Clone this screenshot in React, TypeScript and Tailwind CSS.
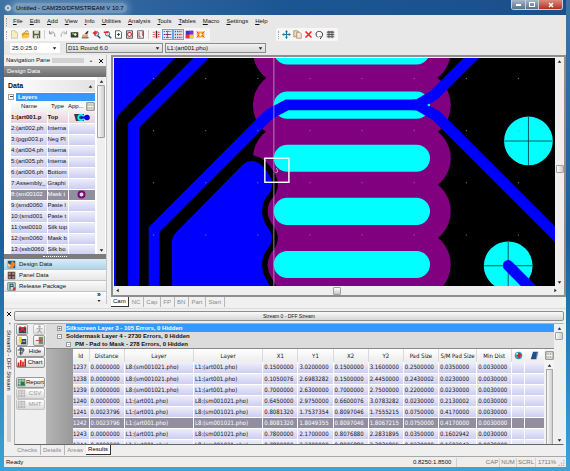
import React from 'react';
import clsx from 'clsx';

const MENUS = ['File', 'Edit', 'Add', 'View', 'Info', 'Utilities', 'Analysis', 'Tools', 'Tables', 'Macro', 'Settings', 'Help'];

interface Layer {
  name: string;
  type: string;
}

const LAYERS: Layer[] = [
  { name: '1:(art001.p', type: 'Top' },
  { name: '2:(art002.ph', type: 'Interna' },
  { name: '3:(pgp003.p', type: 'Neg Pl' },
  { name: '4:(art004.ph', type: 'Interna' },
  { name: '5:(art005.ph', type: 'Interna' },
  { name: '6:(art006.ph', type: 'Bottom' },
  { name: '7:Assembly_', type: 'Graphi' },
  { name: '8:(sm00102', type: 'Mask t' },
  { name: '9:(smd0060', type: 'Paste l' },
  { name: '10:(smd001', type: 'Paste t' },
  { name: '11:(sst0010', type: 'Silk top' },
  { name: '12:(sm0060', type: 'Mask b' },
  { name: '13:(ssb0060', type: 'Silk bo' },
];

const RESULT_HEADS = ['Id', 'Distance', 'Layer', 'Layer', 'X1', 'Y1', 'X2', 'Y2', 'Pad Size', 'S/M Pad Size', 'Min Dist'];

const RESULTS = [
  ['1237', '0.0000000', 'L8:(sm001021.pho)', 'L1:(art001.pho)', '0.1500000', '3.0200000', '0.1500000', '3.1600000', '0.2500000', '0.0350000', '0.0030000'],
  ['1238', '0.0000000', 'L8:(sm001021.pho)', 'L1:(art001.pho)', '0.1050076', '2.6983282', '0.1500000', '2.4450000', '0.2430002', '0.0230000', '0.0030000'],
  ['1239', '0.0000000', 'L8:(sm001021.pho)', 'L1:(art001.pho)', '0.7000000', '2.6300000', '0.7000000', '2.7500000', '0.2200000', '0.0230000', '0.0030000'],
  ['1240', '0.0000000', 'L1:(art001.pho)', 'L8:(sm001021.pho)', '0.6450000', '2.9750000', '0.6600076', '3.0783282', '0.0230000', '0.2130002', '0.0030000'],
  ['1241', '0.0023796', 'L1:(art001.pho)', 'L8:(sm001021.pho)', '0.8081320', '1.7537354', '0.8097046', '1.7555215', '0.0750000', '0.4170000', '0.0030000'],
  ['1242', '0.0023796', 'L1:(art001.pho)', 'L8:(sm001021.pho)', '0.8081320', '1.8049355', '0.8097046', '1.8067215', '0.0750000', '0.4170000', '0.0030000'],
  ['1243', '0.0000000', 'L1:(art001.pho)', 'L8:(sm001021.pho)', '0.7800000', '2.1700000', '0.8076880', '2.2831895', '0.0350000', '0.1602942', '0.0030000'],
  ['1244', '0.0000000', 'L1:(art001.pho)', 'L8:(sm001021.pho)', '0.7800000', '2.2700000', '0.8076880', '2.3831895', '0.0230000', '0.1602942', '0.0030000'],
];

const ICONS: Record<string, React.ReactNode> = {
  new: <><path d="M2 1h5l3 3v7H2z" fill="#f4eec0" stroke="#b9b48a" strokeWidth=".8" /><path d="M7 1v3h3" fill="#d8d29a" /></>,
  open: <><path d="M1 5l3-2 7 1-1 6-8 1z" fill="#e0a010" /><path d="M4 6h8l-3 5H1z" fill="#f8c83c" /><path d="M5 3c2-3 4-2 5 0" stroke="#555" fill="none" /></>,
  save: <><path d="M1 1h10v10H1z" fill="#59613f" /><path d="M3 1h6v4H3zM3 7h6v4H3z" fill="#dfe3cf" /><path d="M7 8h1v3H7z" fill="#333" /></>,
  undo: <path d="M2 1v4h4M2 5c3-4 8-3 7 4" fill="none" stroke="#8d8d8d" strokeWidth="1.2" />,
  redo: <path d="M10 1v4H6M10 5C7 1 2 2 3 9" fill="none" stroke="#a9a9a9" strokeWidth="1.2" />,
  zoomAll: <><path d="M1 3h10v7H1z" fill="#333b33" /><circle cx="7" cy="6" r="2.4" fill="#dff0d0" stroke="#222" /><path d="M3 4h2v2H3z" fill="#9c3" /></>,
  paint: <><path d="M5 5l4-4 1 1-2 4z" fill="#333" /><path d="M2 6h7l1 5H1z" fill="#e0a878" /><path d="M1 10h9v1H1z" fill="#345" /></>,
  zoomIn: <><path d="M7 7l4 4" stroke="#246" strokeWidth="1.6" /><circle cx="6" cy="5" r="3" fill="#cde" stroke="#357" /><path d="M1 4h6M4 1v6" stroke="#e22" strokeWidth="1.8" /></>,
  zoomOut: <><path d="M7 7l4 4" stroke="#246" strokeWidth="1.6" /><circle cx="6" cy="5" r="3" fill="#cde" stroke="#357" /><path d="M1 3h6" stroke="#e22" strokeWidth="2" /></>,
  sheetPlus: <><path d="M2 1h6l2 2v8H2z" fill="#fff" stroke="#333" /><path d="M4 6h4M6 4v4" stroke="#262" strokeWidth="1.4" /></>,
  sheetRed: <><path d="M2 1h8v10H2z" fill="#ddd" stroke="#333" /><circle cx="6" cy="6" r="2.6" fill="#fff" stroke="#d22" strokeWidth="1.4" /></>,
  sheetPen: <><path d="M2 1h8v10H2z" fill="#eee" stroke="#444" /><path d="M4 3v6h2M9 2v6" stroke="#a33" strokeWidth="1.2" fill="none" /></>,
  snap: <><path d="M1 3h3M1 6h3M1 9h3M8 3h3M8 6h3M8 9h3" stroke="#e33" strokeWidth="1.6" strokeDasharray="1.4 .6" /><path d="M5 1h2v10H5z" fill="#333" /></>,
  gridBlue: <><path d="M1 2h10M1 6h10M1 10h10" stroke="#d22" strokeWidth="1.6" strokeDasharray="1.6 1.4" /><path d="M1 6h10M6 1v10" stroke="#226" strokeWidth=".7" /></>,
  grid: <path d="M1 2h10M1 6h10M1 10h10" stroke="#d22" strokeWidth="1.8" strokeDasharray="1.8 1.2" />,
  colors: <><path d="M1 1h10v10H1z" fill="#33c" /><path d="M6 1h5v5H6z" fill="#8a2be2" /><path d="M1 6h5v5H1z" fill="#e33" /><path d="M6 6h5v5H6z" fill="#fc3" /></>,
  film: <><path d="M1 2h10v8H1z" fill="#f7b23c" /><path d="M1 2l4 4-4 4M11 2L7 6l4 4" stroke="#e33" strokeWidth="1.2" fill="none" /><circle cx="6" cy="6" r="1.6" fill="#fff" /></>,
  move: <><path d="M1 6h10M6 1v10" stroke="#17a" strokeWidth="1.3" /><path d="M4 3l2-3 2 3zM4 9l2 3 2-3zM3 4L0 6l3 2zM9 4l3 2-3 2z" fill="#17a" /></>,
  copy: <><path d="M1 1h5l2 2v6H1z" fill="#f7d9b4" stroke="#85694d" strokeWidth=".8" /><path d="M5 3h4l2 2v6H5z" fill="#fbe8d0" stroke="#85694d" strokeWidth=".8" /></>,
  remove: <path d="M2 2l8 8M10 2l-8 8" stroke="#e22" strokeWidth="2" />,
  rotate: <path d="M4 10C-1 6 2 1 6 2c5 0 5 6 2 8M6 8l2 2-1 2" stroke="#334" strokeWidth="1.3" fill="none" />,
  mirror: <><path d="M1 2h10v8H1z" fill="#c9c9c9" /><path d="M1 3h10M1 6h10M1 9h10M4 1v10M8 1v10" stroke="#333" strokeWidth=".9" /><path d="M2 2h8" stroke="#e33" /></>,
  binRed: <><path d="M1 3h10v8H1z" fill="#29435c" /><path d="M2 2l8 7M10 2L2 9" stroke="#e22" strokeWidth="2" /></>,
  figure: <><circle cx="6" cy="2" r="1.6" fill="#aaa" /><path d="M2 5h8M6 4v3M6 7l-3 4M6 7l3 4" stroke="#aaa" strokeWidth="1.5" /></>,
  binAdd: <><path d="M4 4h7v7H4z" fill="#26486b" /><path d="M1 1h4v8H1z" fill="#e8d62a" /><path d="M6 7h4" stroke="#fff" /></>,
  binMove: <><path d="M5 1h6v10H5z" fill="#7a8d66" /><path d="M1 6h7M6 4l3 2-3 2" stroke="#b44" strokeWidth="1.2" fill="none" /></>,
  hide: <><circle cx="5" cy="2" r="1.7" fill="#345" /><path d="M1 4h9M5 4v7M8 1v6M3 8h5" stroke="#345" strokeWidth="1.5" /></>,
  chart: <><path d="M1 6h2v5H1zM4 3h2v8H4zM7 5h2v6H7zM10 1h2v10h-2z" fill="#d11" /><path d="M0 11h12" stroke="#622" /></>,
  report: <><path d="M1 1h10v10H1z" fill="#57856e" /><path d="M1 4h10M1 7h10M4 1v10M8 1v10" stroke="#dfe" strokeWidth=".8" /><path d="M5 5h5v5H5z" fill="#2a7a3c" /></>,
  sheetGray: <><path d="M1 1h10v10H1z" fill="#b5b5b5" /><path d="M1 4h10M1 7h10M4 1v10M8 1v10" stroke="#eee" strokeWidth=".8" /></>,
  design: <><path d="M1 1h10v10H1z" fill="#24507c" /><path d="M2 11l5-10 4 4-3 6z" fill="#f08020" /><path d="M1 4l4 3-3 4z" fill="#ffd9a0" /></>,
  panel: <><path d="M1 1h10v10H1z" fill="#444" /><path d="M2 2h3v3H2zM7 2h3v3H7zM2 7h3v3H2zM7 7h3v3H7z" fill="#c77" /></>,
  release: <><path d="M1 1h10v10H1z" fill="#cfe6dc" stroke="#366" /><path d="M4 10V3h4v3H4" stroke="#246" strokeWidth="1.4" fill="none" /><path d="M8 7h3v4H8z" fill="#c33" /></>,
  columns: <><path d="M1 1h10v10H1z" fill="#f2f2e8" stroke="#555" /><path d="M2 4h8M2 8h8" stroke="#555" strokeDasharray="1.5 .8" /></>,
  globe: <><circle cx="6" cy="6" r="5" fill="#2aa0b4" /><path d="M6 2l4 3-3 5-3-4z" fill="#d22" /><path d="M2 4l3-2v3z" fill="#fff" /></>,
  book: <><path d="M4 1h7L8 11H1z" fill="#1f4f8f" /><path d="M9 2l2 0-2 9H8z" fill="#8a93a0" /></>,
  app: <><circle cx="6" cy="6" r="5" fill="#b7c9d6" stroke="#5b7a94" /><path d="M6 1v10M1 6h10M3 3l6 6M9 3L3 9" stroke="#e7f0f5" /><circle cx="6" cy="6" r="1.6" fill="#567" /></>,
  resize: <path d="M9 2h2v2H9zM5 6h2v2H5zM9 6h2v2H9zM1 10h2v2H1zM5 10h2v2H5zM9 10h2v2H9z" fill="#aaa" />,
  up: <path d="M3 8l3-4 3 4z" fill="#222" />,
  down: <path d="M3 4l3 4 3-4z" fill="#222" />,
  left: <path d="M8 3L4 6l4 3z" fill="#222" />,
  right: <path d="M4 3l4 3-4 3z" fill="#222" />,
  close: <path d="M2 2l8 8M10 2l-8 8" stroke="#111" strokeWidth="2" />,
};

const Icon: React.FC<{ name: string; className?: string }> = ({ name, className = 'size-[9px]' }) => (
  <svg viewBox="0 0 12 12" className={clsx('shrink-0', className)} aria-hidden="true">{ICONS[name]}</svg>
);

const ToolButton: React.FC<{ name: string; active?: boolean }> = ({ name, active }) => (
  <button
    aria-label={name}
    className={clsx('flex size-[11px] items-center justify-center', active && 'border border-[#5aaaf0] bg-[#dcebfa]')}
  >
    <Icon name={name} />
  </button>
);

const Grip = () => <span className="h-2 border-l border-dotted border-[#a0a0a0]" />;

const ScrollColumn: React.FC<{ thumb: string; className?: string }> = ({ thumb, className }) => (
  <div className={clsx('flex w-2 shrink-0 flex-col items-center bg-[#efefef]', className)}>
    <button aria-label="Scroll up" className="h-2"><Icon name="up" className="size-[7px]" /></button>
    <div className="flex w-full flex-1 flex-col">
      <div className={clsx('w-full rounded-[1px] border border-[#a0a0a0] bg-linear-to-r from-[#f8f8f8] to-[#cfcfcf]', thumb)} />
    </div>
    <button aria-label="Scroll down" className="h-2"><Icon name="down" className="size-[7px]" /></button>
  </div>
);

const TitleBar = () => (
  <header className="flex h-[15px] shrink-0 items-center bg-linear-to-r from-[#3f73a5] via-[#1d5594] to-[#1a4f8b] pr-[3px]">
    <Icon name="app" className="mr-[1px] size-[8px]" />
    <h1 className="rounded-full bg-white/30 px-[3px] text-[6px] leading-[10px] text-black shadow-[0_0_6px_3px_rgba(200,215,230,0.3)]">
      Untitled - CAM350/DFMSTREAM V 10.7
    </h1>
    <div className="ml-auto flex h-[10px] self-start overflow-hidden rounded-b-[3px] border border-t-0 border-[#c3d0dd]">
      <button aria-label="Minimize" className="flex w-[14px] items-center justify-center border-r border-[#c3d0dd] bg-linear-to-b from-[#a9b8cb] to-[#55728f]">
        <span className="h-[2px] w-[5px] bg-white" />
      </button>
      <button aria-label="Maximize" className="flex w-[13px] items-center justify-center border-r border-[#c3d0dd] bg-linear-to-b from-[#a9b8cb] to-[#55728f]">
        <span className="h-[5px] w-[6px] border border-white" />
      </button>
      <button aria-label="Close" className="flex w-[23px] items-center justify-center bg-linear-to-b from-[#d98a7c] to-[#b52a1a]">
        <svg viewBox="0 0 12 12" className="size-[6px]"><path d="M2 2l8 8M10 2l-8 8" stroke="#fff" strokeWidth="3" /></svg>
      </button>
    </div>
  </header>
);

const Combo: React.FC<{ label: string; value: string; className: string }> = ({ label, value, className }) => (
  <div className={clsx('flex h-[10px] items-center', className)}>
    <select aria-label={label} className="min-w-0 flex-1 appearance-none text-[6px] leading-[8px] outline-none">
      <option>{value}</option>
    </select>
    <Icon name="down" className="pointer-events-none size-[7px]" />
  </div>
);

const Toolbars = () => (
  <div className="shrink-0 bg-[#e8e8e8]">
    <nav className="flex h-[13px] items-center pl-[2px]">
      <Grip />
      <div className="ml-[6px] flex gap-[7px]">
        {MENUS.map((menu) => (
          <button key={menu} className="text-[6px] leading-[9px]"><span className="underline">{menu[0]}</span>{menu.slice(1)}</button>
        ))}
      </div>
    </nav>
    <div className="flex h-[13px] items-center">
      <div className="flex h-[13px] w-[206px] items-center rounded-[2px] bg-[#f7f7f7] pl-[2px]">
        <Grip />
        <div className="ml-[2px] flex">
          {['new', 'open', 'save'].map((n) => <ToolButton key={n} name={n} />)}
        </div>
        <span className="mx-[2px] h-[9px] border-l border-[#d0d0d0]" />
        <div className="flex">
          {['undo', 'redo', 'zoomAll', 'paint', 'zoomIn', 'zoomOut', 'sheetPlus', 'sheetRed', 'sheetPen'].map((n) => <ToolButton key={n} name={n} />)}
        </div>
        <span className="mx-[2px] h-[9px] border-l border-[#d0d0d0]" />
        <div className="flex">
          <ToolButton name="snap" />
          <ToolButton name="gridBlue" active />
          <ToolButton name="grid" active />
          <ToolButton name="colors" />
          <ToolButton name="film" />
        </div>
      </div>
      <div className="ml-[66px] flex h-[13px] items-center rounded-[2px] bg-[#f7f7f7] px-[2px]">
        <Grip />
        <div className="ml-[2px] flex">
          {['move', 'copy', 'remove', 'rotate', 'mirror'].map((n) => <ToolButton key={n} name={n} />)}
        </div>
      </div>
    </div>
    <div className="flex h-[14px] items-center pl-[6px]">
      <Combo label="Grid" value="25.0:25.0" className="mr-[6px] w-[50px] bg-white px-[2px]" />
      <Combo label="Aperture" value="D11   Round 6.0" className="mr-[2px] w-[97px] border border-[#8a8a8a] bg-linear-to-b from-[#f2f2f2] to-[#d8d8d8] px-[1px]" />
      <Combo label="Layer" value="L1:(art001.pho)" className="w-[101px] border border-[#8a8a8a] bg-linear-to-b from-[#f2f2f2] to-[#d8d8d8] px-[1px]" />
    </div>
  </div>
);

const NavigationPane = () => (
  <aside className="mb-[4px] flex w-[103px] shrink-0 flex-col border-r border-[#c8c8c8] bg-[#f0f0f0]">
    <div className="flex h-[11px] shrink-0 items-center gap-[2px] px-[2px]">
      <h2 className="text-[6px] leading-[9px] whitespace-nowrap">Navigation Pane</h2>
      <span className="h-[5px] flex-1 bg-[#d2d2d2]" />
      <Icon name="up" className="mx-[2px] size-[6px] opacity-60" />
      <button aria-label="Close navigation"><Icon name="close" className="size-[6px]" /></button>
    </div>
    <div className="flex h-[11px] shrink-0 items-center bg-linear-to-b from-[#9a9a9a] to-[#6c6c6c] px-[3px] text-[6px] text-white">Design Data</div>
    <div className="flex min-h-0 flex-1 bg-white pl-[4px]">
      <div className="min-w-0 flex-1 pt-[3px]">
        <div className="flex h-[12px] items-center justify-between bg-linear-to-r from-white to-[#e2e2e2] text-[7px] font-bold">
          Data
          <Icon name="up" className="mr-[1px] size-[7px]" />
        </div>
        <div className="flex h-[9px] items-center gap-[2px] text-[6px]">
          <span className="flex size-[6px] items-center justify-center border border-[#a0a0a0] leading-none"><span className="h-px w-[3px] bg-[#446]" /></span>
          <span className="flex-1 bg-[#3399ff] pl-[2px] leading-[8px] font-bold text-white">Layers</span>
        </div>
        <table className="ml-[3px] w-[84px] table-fixed text-[6px] leading-[9px]">
          <colgroup>
            <col className="w-[36px]" />
            <col className="w-[21px]" />
            <col className="w-[27px]" />
          </colgroup>
          <thead>
            <tr className="h-[11px] bg-linear-to-b from-white to-[#efefef]">
              <th className="font-normal">Name</th>
              <th className="font-normal">Type</th>
              <th className="font-normal">
                <span className="flex items-center justify-between">App...<Icon name="columns" /></span>
              </th>
            </tr>
          </thead>
          <tbody>
            {LAYERS.map((layer, i) => (
              <tr
                key={layer.name}
                className={clsx('h-[11px]', {
                  'bg-linear-to-b from-[#f5eaf0] to-[#e6d3dc] font-bold': i === 0,
                  'bg-[#918ea0] text-white': i === 7,
                  'bg-linear-to-b from-[#f0f0fa] to-[#cdcdf3]': i !== 0 && i !== 7,
                })}
              >
                <td className="border-r border-b border-white whitespace-nowrap">{layer.name}</td>
                <td className="border-r border-b border-white whitespace-nowrap">{layer.type}</td>
                <td className="border-b border-white">
                  {i === 0 && (
                    <svg viewBox="0 0 18 9" className="mx-auto h-[9px] w-[18px]">
                      <path d="M1 1h10v7H3z" fill="#3a3a3a" /><circle cx="8" cy="4.5" r="3.6" fill="#0ff" /><circle cx="14" cy="4.5" r="2.8" fill="#00d" /><circle cx="8" cy="4.5" r="1.8" fill="#003a7a" /><path d="M8 4.5h6" stroke="#00d" strokeWidth="2" />
                    </svg>
                  )}
                  {i === 7 && (
                    <svg viewBox="0 0 9 9" className="mx-auto size-[9px]"><circle cx="4.5" cy="4.5" r="3" fill="#ddd" stroke="#800080" strokeWidth="2" /></svg>
                  )}
                </td>
              </tr>
            ))}
          </tbody>
        </table>
      </div>
      <ScrollColumn thumb="h-[53px]" className="mr-[1px] ml-[2px]" />
    </div>
    <div className="flex h-[5px] shrink-0 items-center justify-center bg-[#7c7c7c]">
      <span className="w-6 border-t border-dotted border-white" />
    </div>
    {[['design', 'Design Data'], ['panel', 'Panel Data'], ['release', 'Release Package']].map(([icon, text], i) => (
      <button
        key={text}
        className={clsx(
          'flex h-[11px] shrink-0 items-center gap-[3px] border-b border-[#c4c4c4] pl-[3px] text-[6px]',
          i === 0 ? 'bg-linear-to-b from-[#d9ecf8] to-[#b0d5ec]' : 'bg-linear-to-b from-[#fafafa] to-[#e6e6e6]',
        )}
      >
        <Icon name={icon} />
        {text}
      </button>
    ))}
    <div className="flex h-[12px] shrink-0 items-start justify-end bg-linear-to-b from-white to-[#ececec] pr-[4px]">
      <button aria-label="Configure buttons" className="flex flex-col items-center text-[7px] leading-[6px] font-bold">»<Icon name="down" className="size-[6px]" /></button>
    </div>
  </aside>
);

const PAD_ROWS = [51, 105, 158, 211, 264];
const DOT_COLS = [153, 205, 257, 309, 361, 413, 465, 517];
const DOT_ROWS = [78, 130, 182, 234];

const Board = () => (
  <svg viewBox="114 58 440 228" preserveAspectRatio="xMinYMin slice" className="min-h-0 min-w-0 flex-1 bg-black">
    {PAD_ROWS.map((y) => <rect key={y} x="252.6" y={y - 34} width="197.4" height="68" rx="34" fill="#800080" />)}
    <path
      d="M171.7 290V242Q172 236 176 232L242 165Q251 157 260 164Q267 170 270.500 178Q274 185 269 193Q262 200 261.700 211Q262 220 268 228Q275 237 269 246Q262 254 261.700 264Q262 273 267 281L272 290Z"
      fill="#00f"
      stroke="#000"
      strokeWidth="11"
      paintOrder="stroke"
    />
    {PAD_ROWS.map((y) => <rect key={y} x="273.3" y={y - 13.5} width="156" height="27" rx="13.5" fill="#0ff" />)}
    <path d="M114 58H175L120 113Q116 117 116 124V290H114Z" fill="#00f" />
    <path d="M116 124V290H118V114Z" fill="#000" />
    {[[527.5, 140.7], [507.3, 265.3]].map(([cx, cy]) => (
      <g key={cx}>
        <circle cx={cx} cy={cy} r="24.3" fill="#0ff" />
        <path d={`M${cx - 24} ${cy}h48M${cx} ${cy - 24}v48`} stroke="#045c5c" />
      </g>
    ))}
    <g fill="none" stroke="#00f" strokeWidth="10.8">
      <path d="M206 53L133.500 125.500V290" />
      <path d="M154 290V229L269 114L286.500 104.800H417L434 94.500L476 52.500" />
      <path d="M412 104.800H417L436 116L562 242" />
      <path d="M507.300 265L536 294" strokeLinecap="round" />
    </g>
    <rect x="427" y="104" width="2" height="2" fill="#0ff" />
    <path d="M273.500 58V286" stroke="#b9a3c9" strokeWidth=".8" />
    {DOT_ROWS.map((y) => DOT_COLS.map((x) => <rect key={`${x}-${y}`} x={x} y={y} width="1" height="1" fill="#8a8a8a" />))}
    <path d="M276 168q3 5-1 4" fill="none" stroke="#ddd" strokeWidth=".8" />
    <rect x="264.500" y="158" width="24" height="24" fill="none" stroke="#fff" strokeWidth="1.4" />
  </svg>
);

const TabRow: React.FC<{ tabs: string[]; active: string }> = ({ tabs, active }) => (
  <div className="flex h-[11px] shrink-0 items-start">
    {tabs.map((tab) => (
      <button
        key={tab}
        className={clsx(
          'h-[10px] text-[6px] leading-[9px]',
          tab === active ? 'border-r border-b border-[#333] bg-white px-[2px] text-black' : 'px-[3px] text-[#8b8b8b] shadow-[1px_0_0_#b8b8b8]',
        )}
      >
        {tab}
      </button>
    ))}
  </div>
);

const Viewport = () => (
  <main className="ml-[4px] flex min-w-0 flex-1 flex-col">
    <div className="flex min-h-0 flex-1 flex-col border-2 border-[#8e8e8e] bg-[#efefef] pt-[1px] pl-[1px]">
      <div className="flex min-h-0 flex-1">
        <Board />
        <div className="flex w-[9px] shrink-0 flex-col items-center justify-between">
          <Icon name="up" className="size-[7px]" />
          <span className="mt-[100px] mb-auto h-[8px] w-[8px] rounded-[1px] border border-[#a0a0a0] bg-linear-to-r from-white to-[#c8c8c8]" />
          <Icon name="down" className="size-[7px]" />
        </div>
      </div>
      <div className="flex h-[9px] shrink-0 items-center justify-between pr-[5px]">
        <Icon name="left" className="size-[7px]" />
        <span className="h-[8px] w-[8px] rounded-[1px] border border-[#a0a0a0] bg-linear-to-b from-white to-[#c8c8c8]" />
        <Icon name="right" className="size-[7px]" />
      </div>
    </div>
    <TabRow tabs={['Cam', 'NC', 'Cap', 'FP', 'BN', 'Part', 'Start']} active="Cam" />
  </main>
);

const SideButton: React.FC<{ icon: string; text?: string; disabled?: boolean }> = ({ icon, text, disabled }) => (
  <button
    aria-label={text ?? icon}
    disabled={disabled}
    className={clsx(
      'flex h-[11px] items-center rounded-[2px] border bg-linear-to-b from-white to-[#dcdcdc] text-[6px]',
      text ? 'w-full' : 'w-[12px] justify-center',
      disabled ? 'border-[#c4c4c4] text-[#999]' : 'border-[#999]',
    )}
  >
    <Icon name={icon} />
    {text && <span className="flex-1 text-center">{text}</span>}
  </button>
);

const TreeRow: React.FC<{ text: string; indent: string; sign: string; selected?: boolean }> = ({ text, indent, sign, selected }) => (
  <div className={clsx('flex h-[8px] shrink-0 items-center gap-[4px] bg-[#dcdcdc] text-[6px] leading-[8px] font-bold', indent)}>
    <span className="flex size-[5px] items-center justify-center border border-[#999] bg-white text-[5px] leading-none font-normal">{sign}</span>
    <span className={clsx('flex-1', selected && 'bg-[#3399ff] text-white')}>{text}</span>
  </div>
);

const ResultsTable = () => (
  <table className="w-full table-fixed font-['DejaVu_Sans_Condensed','DejaVu_Sans',sans-serif] text-[6px] leading-[10px]">
    <colgroup>
      <col className="w-[16px]" />
      <col className="w-[35px]" />
      <col className="w-[69px]" />
      <col className="w-[69px]" />
      {RESULT_HEADS.slice(4).map((h) => <col key={h} className={h === 'S/M Pad Size' ? 'w-[38px]' : 'w-[35px]'} />)}
      <col className="w-[13px]" />
      <col className="w-[19px]" />
    </colgroup>
    <thead>
      <tr className="h-[13px] bg-linear-to-b from-white to-[#ededed]">
        {RESULT_HEADS.map((head, i) => (
          <th key={`${head}-${i}`} className="border-r border-[#dadada] font-normal whitespace-nowrap">{head}</th>
        ))}
        <th><Icon name="globe" className="mx-auto size-[9px]" /></th>
        <th><Icon name="book" className="mx-auto size-[9px]" /></th>
      </tr>
    </thead>
    <tbody>
      {RESULTS.map((row) => (
        <tr
          key={row[0]}
          className={clsx('h-[11px]', row[0] === '1242' ? 'bg-[#918ea0] text-white' : 'bg-linear-to-b from-[#f0f0fa] to-[#cdcdf3]')}
        >
          {row.map((cell, i) => (
            <td key={i} className="border-r border-b border-white whitespace-nowrap not-first:pl-[1px]">{cell}</td>
          ))}
          <td className="border-r border-b border-white" />
          <td className="border-b border-white" />
        </tr>
      ))}
    </tbody>
  </table>
);

const StreamPane = () => (
  <section className="flex h-[148px] shrink-0 border-t border-[#dadada] bg-[#efefef] pt-[2px]">
    <div className="flex w-[10px] shrink-0 flex-col items-center gap-[4px] pb-[14px]">
      <button aria-label="Close stream"><Icon name="close" className="size-[6px]" /></button>
      <Icon name="left" className="size-[5px] opacity-60" />
      <span className="text-[6px] leading-[8px] whitespace-nowrap [writing-mode:vertical-rl]">Stream0 - DFF Stream</span>
      <span className="w-[4px] flex-1 bg-[#d2d2d2]" />
    </div>
    <div className="flex min-w-0 flex-1 flex-col">
      <h2 className="mr-[2px] h-[10px] shrink-0 rounded-[2px] border border-[#8e8e8e] bg-linear-to-b from-[#fafafa] to-[#d6d6d6] text-center text-[5px] leading-[8px]">
        Stream 0 - DFF Stream
      </h2>
      <div className="mt-[2px] mr-[2px] flex min-h-0 flex-1 border border-t-[#b0b0b0] border-r-transparent border-b-[#666] border-l-[#b0b0b0]">
        <div className="flex w-[31px] shrink-0 flex-col pr-[1px] pl-[1px]">
          <div className="flex justify-between"><SideButton icon="binRed" /><SideButton icon="figure" disabled /></div>
          <div className="flex justify-between"><SideButton icon="binAdd" /><SideButton icon="binMove" /></div>
          <SideButton icon="hide" text="Hide" />
          <SideButton icon="chart" text="Chart" />
          <div className="mt-[9px] flex flex-col">
            <SideButton icon="report" text="Report" />
            <SideButton icon="sheetGray" text="CSV" disabled />
            <SideButton icon="sheetGray" text="MHT" disabled />
          </div>
        </div>
        <div className="flex min-w-0 flex-1 flex-col overflow-hidden">
          <TreeRow text="Silkscreen Layer 3 - 105 Errors, 0 Hidden" indent="pl-[11px]" sign="+" selected />
          <TreeRow text="Soldermask Layer 4 - 2730 Errors, 0 Hidden" indent="pl-[11px]" sign="-" />
          <TreeRow text="PM - Pad to Mask - 278 Errors, 0 Hidden" indent="pl-[20px]" sign="-" />
          <div className="flex min-h-0 flex-1 border-t border-[#888]">
            <div className="w-[27px] shrink-0 bg-linear-to-r from-[#b4b4b4] to-[#999]" />
            <div className="min-w-0 flex-1 overflow-hidden bg-white"><ResultsTable /></div>
            <div className="flex w-[10px] shrink-0 flex-col items-center bg-[#f4f4f4]">
              <span className="flex h-[13px] items-center"><Icon name="columns" /></span>
              <Icon name="up" className="size-[7px]" />
              <span className="w-[7px] flex-1 border border-b-0 border-[#a8a8a8] bg-linear-to-r from-[#f8f8f8] to-[#cfcfcf]" />
            </div>
          </div>
        </div>
        <ScrollColumn thumb="h-[8px]" className="ml-[1px]" />
      </div>
      <TabRow tabs={['Checks', 'Details', 'Areas', 'Results']} active="Results" />
    </div>
  </section>
);

const StatusBar = () => (
  <footer className="flex h-[11px] shrink-0 items-center border-t border-[#a8a8a8] bg-[#f0eded] text-[6px] leading-[9px]">
    <span className="pl-[2px]">Ready</span>
    <span className="ml-auto w-[44px] border-r border-[#d0d0d0]">0.8250:1.8500</span>
    <span className="ml-[28px] w-[15px] border-r border-[#d0d0d0] text-center text-[#777]">CAP</span>
    <span className="w-[17px] border-r border-[#d0d0d0] text-center text-[#777]">NUM</span>
    <span className="w-[19px] border-r border-[#d0d0d0] text-center text-[#777]">SCRL</span>
    <span className="w-[22px] text-center text-[#777]">1711%</span>
    <Icon name="resize" className="mr-[1px] size-[7px]" />
  </footer>
);

const App = () => (
  <div className="flex h-screen flex-col bg-linear-to-b from-[#3f73a5] via-[#1b5f9c] to-[#3da3d6] px-[4px] pb-[4px] font-['Liberation_Sans',Arial,sans-serif] text-[#111]">
    <TitleBar />
    <Toolbars />
    <div className="flex min-h-0 flex-1 bg-[#f0f0f0]">
      <NavigationPane />
      <Viewport />
    </div>
    <StreamPane />
    <StatusBar />
  </div>
);

export default App;
